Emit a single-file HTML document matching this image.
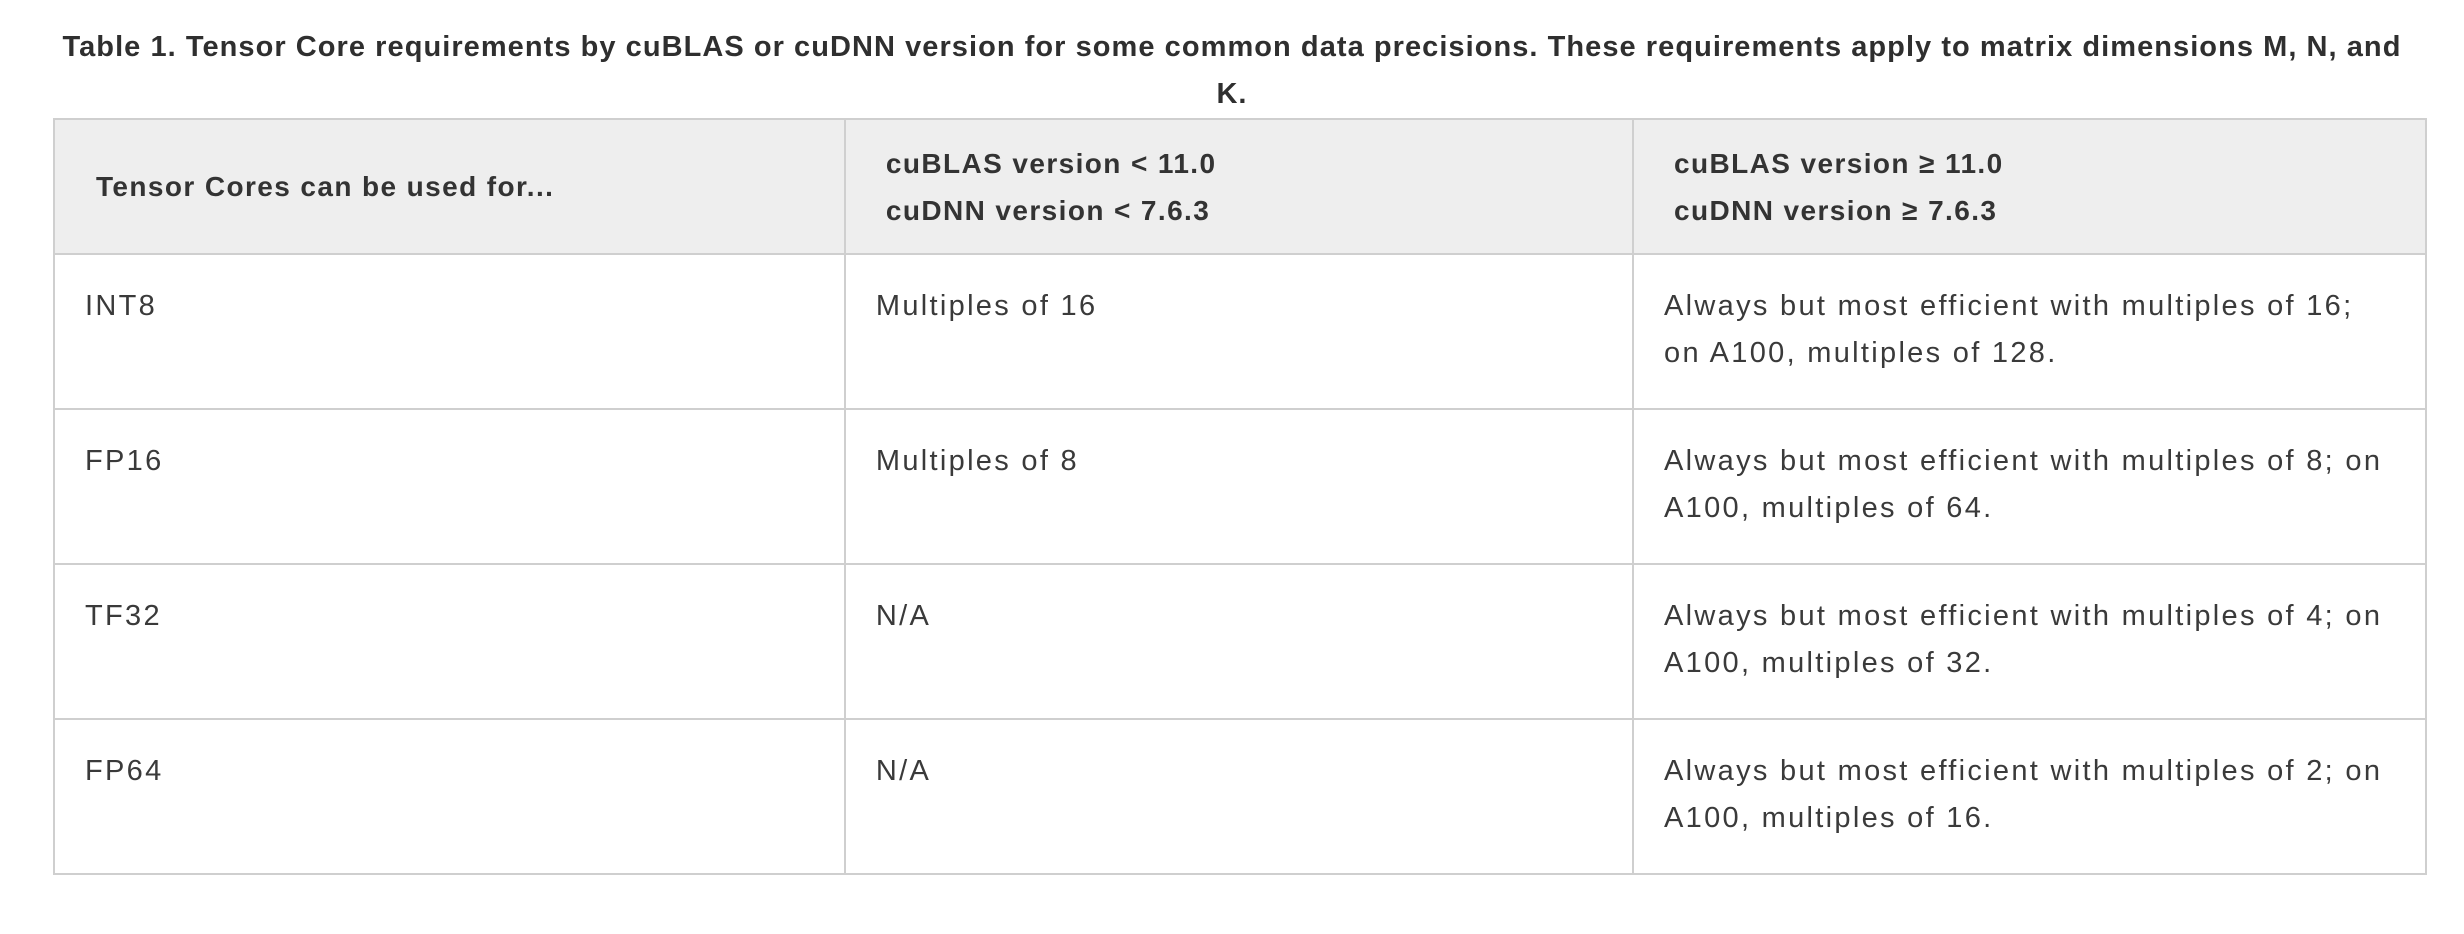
<!DOCTYPE html>
<html><head><meta charset="utf-8"><style>
html,body{margin:0;padding:0;background:#fff;}
body{width:2464px;height:934px;position:relative;overflow:hidden;font-family:"Liberation Sans",Arial,sans-serif;color:#3a3a3a;}
.title{position:absolute;left:0;width:2464px;top:24px;text-align:center;font-weight:bold;font-size:29px;line-height:47px;letter-spacing:1.05px;color:#2f2f2f;}
.title span{white-space:nowrap;}
table{position:absolute;left:53px;top:118px;width:2374px;border-collapse:collapse;}
td,th{border:2px solid #cfcfcf;vertical-align:top;text-align:left;font-size:29px;line-height:47px;letter-spacing:2.3px;}
th{background:#eeeeee;font-weight:bold;height:133px;vertical-align:middle;padding:0 0 0 40px;color:#333;font-size:28px;letter-spacing:1.4px;}
td{height:155px;box-sizing:border-box;padding:28px 20px 0 30px;white-space:nowrap;}
th:first-child{padding-left:41px;}
</style></head><body>
<div class="title"><span>Table 1. Tensor Core requirements by cuBLAS or cuDNN version for some common data precisions. These requirements apply to matrix dimensions M, N, and</span><br>K.</div>
<table>
<colgroup><col style="width:792px"><col style="width:789px"><col style="width:793px"></colgroup>
<tr><th>Tensor Cores can be used for...</th><th>cuBLAS version &lt; 11.0<br>cuDNN version &lt; 7.6.3</th><th>cuBLAS version ≥ 11.0<br>cuDNN version ≥ 7.6.3</th></tr>
<tr><td>INT8</td><td>Multiples of 16</td><td>Always but most efficient with multiples of 16;<br>on A100, multiples of 128.</td></tr>
<tr><td>FP16</td><td>Multiples of 8</td><td>Always but most efficient with multiples of 8; on<br>A100, multiples of 64.</td></tr>
<tr><td>TF32</td><td>N/A</td><td>Always but most efficient with multiples of 4; on<br>A100, multiples of 32.</td></tr>
<tr><td>FP64</td><td>N/A</td><td>Always but most efficient with multiples of 2; on<br>A100, multiples of 16.</td></tr>
</table>
</body></html>
